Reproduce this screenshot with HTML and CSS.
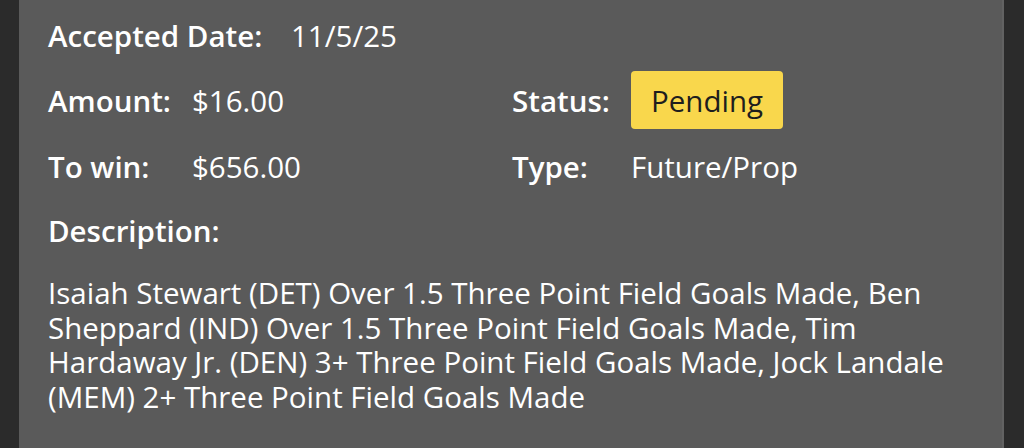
FILE: index.html
```html
<!DOCTYPE html>
<html>
<head>
<meta charset="utf-8">
<link rel="stylesheet" href="styles.css">
</head>
<body>
<div class="frame">
  <div class="panel">
    <div class="row first">
      <span class="label">Accepted Date:</span>
      <span class="value">11/5/25</span>
    </div>
    <div class="grid">
      <div class="pair left">
        <span class="label">Amount:</span>
        <span class="value">$16.00</span>
      </div>
      <div class="pair right">
        <span class="label">Status:</span>
        <span class="badge">Pending</span>
      </div>
      <div class="pair left">
        <span class="label">To win:</span>
        <span class="value">$656.00</span>
      </div>
      <div class="pair right">
        <span class="label">Type:</span>
        <span class="value">Future/Prop</span>
      </div>
    </div>
    <div class="desc-label label">Description:</div>
    <p class="desc">Isaiah Stewart (DET) Over 1.5 Three Point Field Goals Made, Ben Sheppard (IND) Over 1.5 Three Point Field Goals Made, Tim Hardaway Jr. (DEN) 3+ Three Point Field Goals Made, Jock Landale (MEM) 2+ Three Point Field Goals Made</p>
  </div>
</div>
</body>
</html>
```
FILE: styles.css
```css
html, body {
  margin: 0;
  padding: 0;
  background: #2b2b2b;
}
body {
  width: 1024px;
  height: 448px;
  overflow: hidden;
  font-family: "Open Sans", "Noto Sans", sans-serif;
  color: #ffffff;
  font-size: 29.5px;
}
.frame {
  display: flex;
  height: 448px;
  padding-left: 19px;
  padding-right: 20px;
}
.panel {
  flex: 1;
  background: #5a5a5a;
  border-right: 2px solid #626262;
  padding: 15.5px 0 0 29px;
  box-sizing: border-box;
}
.label {
  font-weight: 600;
}
.row.first {
  display: flex;
  height: 40px;
  align-items: center;
}
.row.first .label {
  width: 243px;
}
.grid {
  display: grid;
  grid-template-columns: 464px 1fr;
  grid-auto-rows: 66px;
  margin-top: 15.5px;
}
.pair {
  display: flex;
  align-items: center;
  height: 58px;
}
.left .label {
  width: 144px;
}
.right .label {
  width: 119px;
}
.badge {
  background: #f9d74c;
  color: #1e1e1e;
  border-radius: 4px;
  padding: 0 20px;
  height: 58px;
  display: flex;
  align-items: center;
}
.desc-label {
  margin-top: 7.5px;
  height: 40px;
  display: flex;
  align-items: center;
}
.desc {
  margin: 25.5px 0 0;
  line-height: 34.6px;
  width: 930px;
}
```
